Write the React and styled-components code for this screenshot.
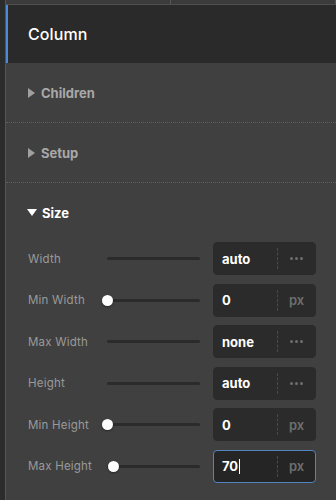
import React from 'react';
import styled, {createGlobalStyle} from 'styled-components';

const GlobalStyle = createGlobalStyle`
  html, body {
    margin: 0;
    padding: 0;
    background: #404040;
  }
  body {
    font-family: Inter, "Liberation Sans", sans-serif;
    -webkit-font-smoothing: antialiased;
  }
`;

const Page = styled.div`
  display: flex;
  width: 336px;
  height: 500px;
  overflow: hidden;
  background: #404040;
`;

const Gutter = styled.div`
  width: 5px;
  flex: none;
  background: #2c2c2c;
  border-right: 1px solid #545454;
`;

const Panel = styled.div`
  flex: 1;
  display: flex;
  flex-direction: column;
  min-width: 0;
`;

const TopStrip = styled.div`
  height: 4px;
  display: flex;
  background: #3b3b3b;
  border-bottom: 1px solid #505050;
`;

const StripCell = styled.div`
  flex: ${props => props.grow || 1};
  border-right: 1px solid #555;
`;

const Header = styled.div`
  height: 58px;
  display: flex;
  align-items: center;
  padding-left: 20px;
  background: #2a2a2a;
  border-left: 2px solid #4a8ad8;
  color: #fff;
  font-size: 16px;
  font-weight: 500;
  letter-spacing: 0.1px;
`;

const Section = styled.div`
  border-bottom: ${props => (props.last ? 'none' : '1px dotted #5e5e5e')};
`;

const SectionHead = styled.div`
  height: ${props => props.h || 59}px;
  display: flex;
  align-items: center;
  gap: 6px;
  padding-left: 22px;
  color: ${props => (props.open ? '#fff' : '#a8a8a8')};
  font-size: 13px;
  font-weight: 700;
`;

const Caret = styled.span`
  width: 0;
  height: 0;
  border-style: solid;
  ${props => props.open
    ? 'margin-left: -1px; margin-right: -1px; border-width: 7px 5px 0 5px; border-color: #fff transparent transparent transparent;'
    : 'border-width: 5px 0 5px 7px; border-color: transparent transparent transparent #a0a0a0;'}
`;

const Rows = styled.div`
  display: flex;
  flex-direction: column;
  gap: 8.6px;
  padding: 0 20px 0 22px;
`;

const Row = styled.div`
  display: grid;
  grid-template-columns: 74px 111px 1fr;
  align-items: center;
  height: 33px;
`;

const Label = styled.div`
  color: #9a9a9a;
  font-size: 11.5px;
  letter-spacing: 0.2px;
`;

const Track = styled.div`
  position: relative;
  width: 93px;
  height: 3px;
  border-radius: 2px;
  background: #2b2b2b;
  margin-left: 5px;
`;

const Thumb = styled.div`
  position: absolute;
  top: 50%;
  width: 11px;
  height: 11px;
  margin: -5.5px 0 0 -5.5px;
  border-radius: 50%;
  background: #fff;
  box-shadow: 0 1px 2px rgba(0, 0, 0, 0.4);
`;

const Field = styled.div`
  display: flex;
  align-items: center;
  height: 33px;
  width: 103px;
  box-sizing: border-box;
  border-radius: 4px;
  background: ${props => (props.focus ? '#252525' : '#2b2b2b')};
  border: 1px solid ${props => (props.focus ? '#5484bd' : '#2b2b2b')};
`;

const Value = styled.div`
  flex: 1;
  padding-left: 8px;
  color: #fff;
  font-size: 13px;
  font-weight: 700;
  display: flex;
  align-items: center;
`;

const Cursor = styled.span`
  display: inline-block;
  width: 1px;
  height: 15px;
  margin-left: 1px;
  background: #fff;
`;

const Unit = styled.div`
  width: 37px;
  height: 21px;
  display: flex;
  align-items: center;
  justify-content: center;
  border-left: 1px dashed #4a4a4a;
  color: #6e6e6e;
  font-size: 13px;
  font-weight: 600;
`;

const Dots = styled.span`
  display: flex;
  gap: 2px;
`;

const Dot = styled.i`
  width: 3px;
  height: 3px;
  border-radius: 50%;
  background: #6e6e6e;
`;

const rows = [
  {label: 'Width', value: 'auto', unit: null},
  {label: 'Min Width', value: '0', unit: 'px', thumb: 0},
  {label: 'Max Width', value: 'none', unit: null},
  {label: 'Height', value: 'auto', unit: null},
  {label: 'Min Height', value: '0', unit: 'px', thumb: 0},
  {label: 'Max Height', value: '70', unit: 'px', thumb: 7.5, focus: true}
];

const SizeRow = ({label, value, unit, thumb, focus}) => (
  <Row>
    <Label>{label}</Label>
    <Track>
      {thumb !== undefined && <Thumb style={{left: `${thumb}%`}} />}
    </Track>
    <Field focus={focus}>
      <Value>
        {value}
        {focus && <Cursor />}
      </Value>
      <Unit>{unit || <Dots><Dot /><Dot /><Dot /></Dots>}</Unit>
    </Field>
  </Row>
);

export default function App() {
  return (
    <>
      <GlobalStyle />
      <Page>
        <Gutter />
        <Panel>
          <TopStrip>
            <StripCell grow={165} />
            <StripCell grow={165} />
          </TopStrip>
          <Header>Column</Header>
          <Section>
            <SectionHead><Caret />Children</SectionHead>
          </Section>
          <Section>
            <SectionHead><Caret />Setup</SectionHead>
          </Section>
          <Section last>
            <SectionHead open h={59}><Caret open />Size</SectionHead>
            <Rows>
              {rows.map(r => <SizeRow key={r.label} {...r} />)}
            </Rows>
          </Section>
        </Panel>
      </Page>
    </>
  );
}
